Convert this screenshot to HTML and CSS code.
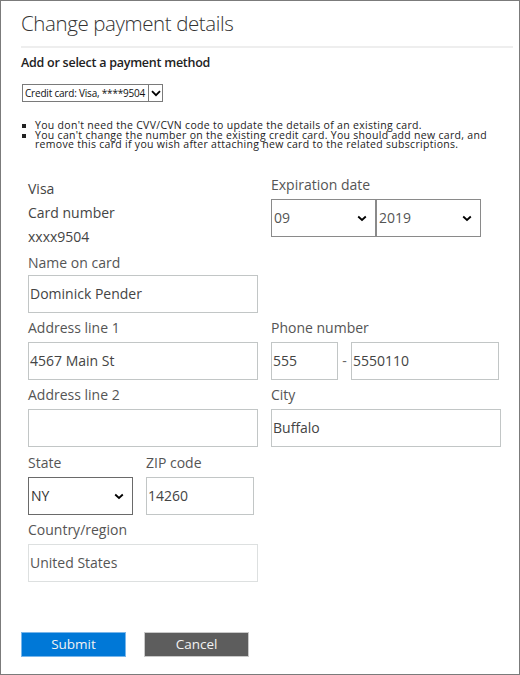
FILE: index.html
```html
<!DOCTYPE html>
<html lang="en">
<head>
<meta charset="utf-8">
<title>Change payment details</title>
<link rel="stylesheet" href="styles.css">
</head>
<body>
<div class="frame">
  <h1 class="title">Change payment details</h1>
  <div class="divider"></div>
  <h2 class="subhead">Add or select a payment method</h2>
  <div class="method-select">
    <span class="ms-text">Credit card: Visa, ****9504</span>
    <span class="ms-btn"><svg width="10" height="7" viewBox="0 0 10 7"><path d="M1 1.2 L5 5.2 L9 1.2" fill="none" stroke="#000" stroke-width="1.8"/></svg></span>
  </div>
  <ul class="notes">
    <li>You don't need the CVV/CVN code to update the details of an existing card.</li>
    <li>You can't change the number on the existing credit card. You should add new card, and remove this card if you wish after attaching new card to the related subscriptions.</li>
  </ul>

  <div class="form">
    <div class="card-info">
      <div class="line">Visa</div>
      <div class="line">Card number</div>
      <div class="line">xxxx9504</div>
      <div class="field">
        <div class="label">Name on card</div>
        <div class="input wide">Dominick Pender</div>
      </div>
    </div>
    <div class="expiry">
      <div class="label">Expiration date</div>
      <div class="expiry-row">
        <div class="select exp">09<svg class="chev" width="10" height="7" viewBox="0 0 10 7"><path d="M1.2 1.5 L5 5 L8.8 1.5" fill="none" stroke="#000" stroke-width="1.8"/></svg></div>
        <div class="select exp">2019<svg class="chev" width="10" height="7" viewBox="0 0 10 7"><path d="M1.2 1.5 L5 5 L8.8 1.5" fill="none" stroke="#000" stroke-width="1.8"/></svg></div>
      </div>
    </div>

    <div class="field">
      <div class="label">Address line 1</div>
      <div class="input wide">4567 Main St</div>
    </div>
    <div class="field">
      <div class="label">Phone number</div>
      <div class="phone-row">
        <div class="input area">555</div>
        <span class="dash">-</span>
        <div class="input number">5550110</div>
      </div>
    </div>

    <div class="field">
      <div class="label">Address line 2</div>
      <div class="input wide"></div>
    </div>
    <div class="field">
      <div class="label">City</div>
      <div class="input wide">Buffalo</div>
    </div>

    <div class="state-zip">
      <div class="field">
        <div class="label">State</div>
        <div class="select state">NY<svg class="chev" width="10" height="7" viewBox="0 0 10 7"><path d="M1.2 1.5 L5 5 L8.8 1.5" fill="none" stroke="#000" stroke-width="1.8"/></svg></div>
      </div>
      <div class="field">
        <div class="label">ZIP code</div>
        <div class="input zip">14260</div>
      </div>
    </div>
    <div></div>

    <div class="field">
      <div class="label">Country/region</div>
      <div class="input wide disabled">United States</div>
    </div>
  </div>

  <div class="actions">
    <button class="btn submit">Submit</button>
    <button class="btn cancel">Cancel</button>
  </div>
</div>
</body>
</html>
```

FILE: styles.css
```css
* { box-sizing: border-box; }
html, body { margin: 0; padding: 0; background: #fff; }
body { font-family: "Open Sans", "Noto Sans", sans-serif; color: #444; }

.frame {
  width: 520px;
  height: 675px;
  border: 1px solid #7b7b7b;
  padding: 0 6px 0 20px;
}

.title {
  margin: 7px 0 0 0;
  font-size: 20.5px;
  font-weight: 300;
  letter-spacing: -0.4px;
  line-height: 30px;
  color: #333;
}

.divider {
  height: 2px;
  background: #eeeeee;
  margin-top: 8px;
}

.subhead {
  margin: 6px 0 0 0;
  font-size: 12.5px;
  font-weight: 600;
  letter-spacing: -0.25px;
  line-height: 18px;
  color: #222;
}

.method-select {
  display: flex;
  align-items: stretch;
  margin: 12px 0 0 1px;
  width: 141px;
  height: 18px;
  border: 1px solid #7a7a7a;
  font-size: 10px;
  letter-spacing: -0.2px;
  line-height: 16px;
  color: #111;
}
.ms-text { flex: 1; padding-left: 2px; white-space: nowrap; overflow: hidden; }
.ms-btn {
  width: 14px;
  border-left: 1px solid #7a7a7a;
  display: flex;
  align-items: center;
  justify-content: center;
}

.notes {
  margin: 19px 0 0 0;
  padding: 0 0 0 14px;
  max-width: 474px;
  list-style: none;
  font-size: 10.5px;
  letter-spacing: 0.3px;
  line-height: 9.7px;
  color: #222;
}
.notes li { position: relative; }
.notes li::before {
  content: "";
  position: absolute;
  left: -13px;
  top: 3px;
  width: 4px;
  height: 4px;
  background: #222;
}

.form {
  display: grid;
  grid-template-columns: 230px 230px;
  column-gap: 13px;
  margin: 23px 0 0 7px;
  font-size: 14px;
  line-height: 24px;
}

.card-info { padding-top: 4px; }
.line { height: 24px; }

.label { height: 26px; line-height: 24px; color: #555; }
.card-info .field .label { line-height: 28px; }
.field { margin-bottom: 3px; }

.input {
  height: 38px;
  border: 1px solid #c2c6c6;
  line-height: 36px;
  padding-left: 1px;
  color: #444;
  white-space: nowrap;
}
.input.wide { width: 230px; }
.input.disabled { border-color: #dde0e0; color: #555; }

.expiry-row { display: flex; }
.select {
  display: flex;
  align-items: center;
  justify-content: space-between;
  height: 38px;
  border: 1px solid #8a8a8a;
  padding: 0 8px 0 2px;
  color: #555;
}
.select.exp { width: 105px; }
.select.state { width: 105px; border-color: #6a6a6a; color: #333; }
.chev { flex: none; }

.phone-row { display: flex; align-items: center; }
.input.area { width: 67px; }
.dash { width: 13px; text-align: center; color: #666; }
.input.number { width: 148px; }

.state-zip { display: flex; gap: 13px; margin-top: 1px; }
.input.zip { width: 108px; }

.actions {
  display: flex;
  gap: 18px;
  margin-top: 47px;
}
.btn {
  width: 105px;
  height: 25px;
  border: 1px solid;
  font-family: "Open Sans", "Noto Sans", sans-serif;
  font-size: 13.5px;
  line-height: 21px;
  color: #f2f2f2;
  padding: 0;
}
.btn.submit { background: #0078d7; border-color: #79b6ea; }
.btn.cancel { background: #5d5d5d; border-color: #c9c9c9; }
```
